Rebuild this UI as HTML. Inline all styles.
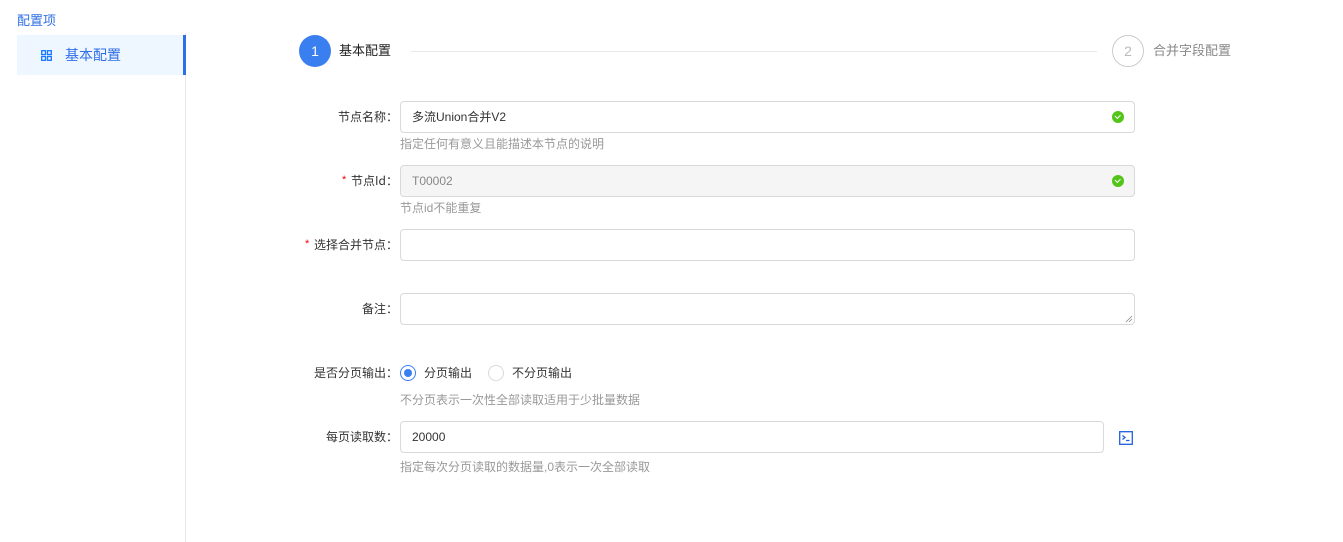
<!DOCTYPE html>
<html><head><meta charset="utf-8"><style>
*{box-sizing:border-box;margin:0;padding:0}
body{width:1343px;height:542px;background:#fff;font-family:"Liberation Sans","Noto Sans CJK SC",sans-serif;font-size:13px;color:#333;position:relative;overflow:hidden}
.abs{position:absolute}
.lbl{position:absolute;right:945px;text-align:right;color:#333;font-size:12px;line-height:16px;font-family:"Noto Sans CJK SC",sans-serif}
.inp{position:absolute;left:400px;width:735px;height:32px;border:1px solid #d9d9d9;border-radius:4px;padding-left:11px;line-height:30px;font-size:12px;color:#333}
.hint{position:absolute;left:400px;font-size:12px;color:#999;line-height:16px}
.ok{position:absolute;right:10px;top:9px;width:12px;height:12px;border-radius:50%;background:#52c41a}
.ok:after{content:"";position:absolute;left:3px;top:2.5px;width:4px;height:2.5px;border-left:1.5px solid #fff;border-bottom:1.5px solid #fff;transform:rotate(-45deg)}
.req{color:#f5222d;margin-right:4px}
</style></head><body>
<div class="abs" style="left:17px;top:12px;color:#2f6fe6;font-size:13px;line-height:18px">配置项</div>
<div class="abs" style="left:185px;top:33px;width:1px;height:509px;background:#e8e8e8"></div>
<div class="abs" style="left:17px;top:35px;width:169px;height:40px;background:#eef6ff;border-right:3px solid #2f6fe6"></div>
<svg class="abs" style="left:41px;top:50px" width="11" height="11" viewBox="0 0 11 11" fill="none" stroke="#1677ff" stroke-width="1.3"><rect x="0.7" y="0.7" width="3.8" height="3.8"/><rect x="6.5" y="0.7" width="3.8" height="3.8"/><rect x="0.7" y="6.5" width="3.8" height="3.8"/><rect x="6.5" y="6.5" width="3.8" height="3.8"/></svg>
<div class="abs" style="left:65px;top:46px;color:#2f6fe6;font-size:14px;line-height:18px">基本配置</div>

<div class="abs" style="left:299px;top:35px;width:32px;height:32px;border-radius:50%;background:#3a7ff0;color:#fff;text-align:center;line-height:32px;font-size:14px">1</div>
<div class="abs" style="left:339px;top:42px;font-size:13px;color:#222;line-height:18px">基本配置</div>
<div class="abs" style="left:411px;top:51px;width:686px;height:1px;background:#e8e8e8"></div>
<div class="abs" style="left:1112px;top:35px;width:32px;height:32px;border-radius:50%;border:1px solid #ccc;color:#bbb;text-align:center;line-height:30px;font-size:14px">2</div>
<div class="abs" style="left:1153px;top:42px;font-size:13px;color:#888;line-height:18px">合并字段配置</div>

<div class="lbl" style="top:109px">节点名称：</div>
<div class="inp" style="top:101px">多流Union合并V2<span class="ok"></span></div>
<div class="hint" style="top:136px">指定任何有意义且能描述本节点的说明</div>

<div class="lbl" style="top:173px"><span class="req">*</span>节点Id：</div>
<div class="inp" style="top:165px;background:#f5f5f5;color:#888">T00002<span class="ok"></span></div>
<div class="hint" style="top:200px">节点id不能重复</div>

<div class="lbl" style="top:237px"><span class="req">*</span>选择合并节点：</div>
<div class="inp" style="top:229px"></div>

<div class="lbl" style="top:301px">备注：</div>
<div class="inp" style="top:293px"></div>
<svg class="abs" style="left:1125px;top:315px" width="8" height="8" stroke="#888" stroke-width="0.8"><line x1="1" y1="7" x2="7" y2="1"/><line x1="4" y1="7" x2="7" y2="4"/></svg>

<div class="lbl" style="top:365px">是否分页输出：</div>
<div class="abs" style="left:400px;top:365px;width:16px;height:16px;border-radius:50%;border:1px solid #3a7ff0"><div style="position:absolute;left:3px;top:3px;width:8px;height:8px;border-radius:50%;background:#3a7ff0"></div></div>
<div class="abs" style="left:424px;top:365px;font-size:12px;line-height:16px">分页输出</div>
<div class="abs" style="left:488px;top:365px;width:16px;height:16px;border-radius:50%;border:1px solid #d9d9d9"></div>
<div class="abs" style="left:512px;top:365px;font-size:12px;line-height:16px">不分页输出</div>
<div class="hint" style="top:392px">不分页表示一次性全部读取适用于少批量数据</div>

<div class="lbl" style="top:429px">每页读取数：</div>
<div class="inp" style="top:421px;width:704px">20000</div>
<svg class="abs" style="left:1119px;top:431px" width="14" height="14" viewBox="0 0 14 14" fill="none" stroke="#1d5fe0" stroke-width="1.3"><rect x="0.7" y="0.7" width="12.6" height="12.6"/><path d="M3.5 4.5l2.5 2-2.5 2M7 9.5h3.5"/></svg>
<div class="hint" style="top:459px">指定每次分页读取的数据量,0表示一次全部读取</div>
</body></html>
